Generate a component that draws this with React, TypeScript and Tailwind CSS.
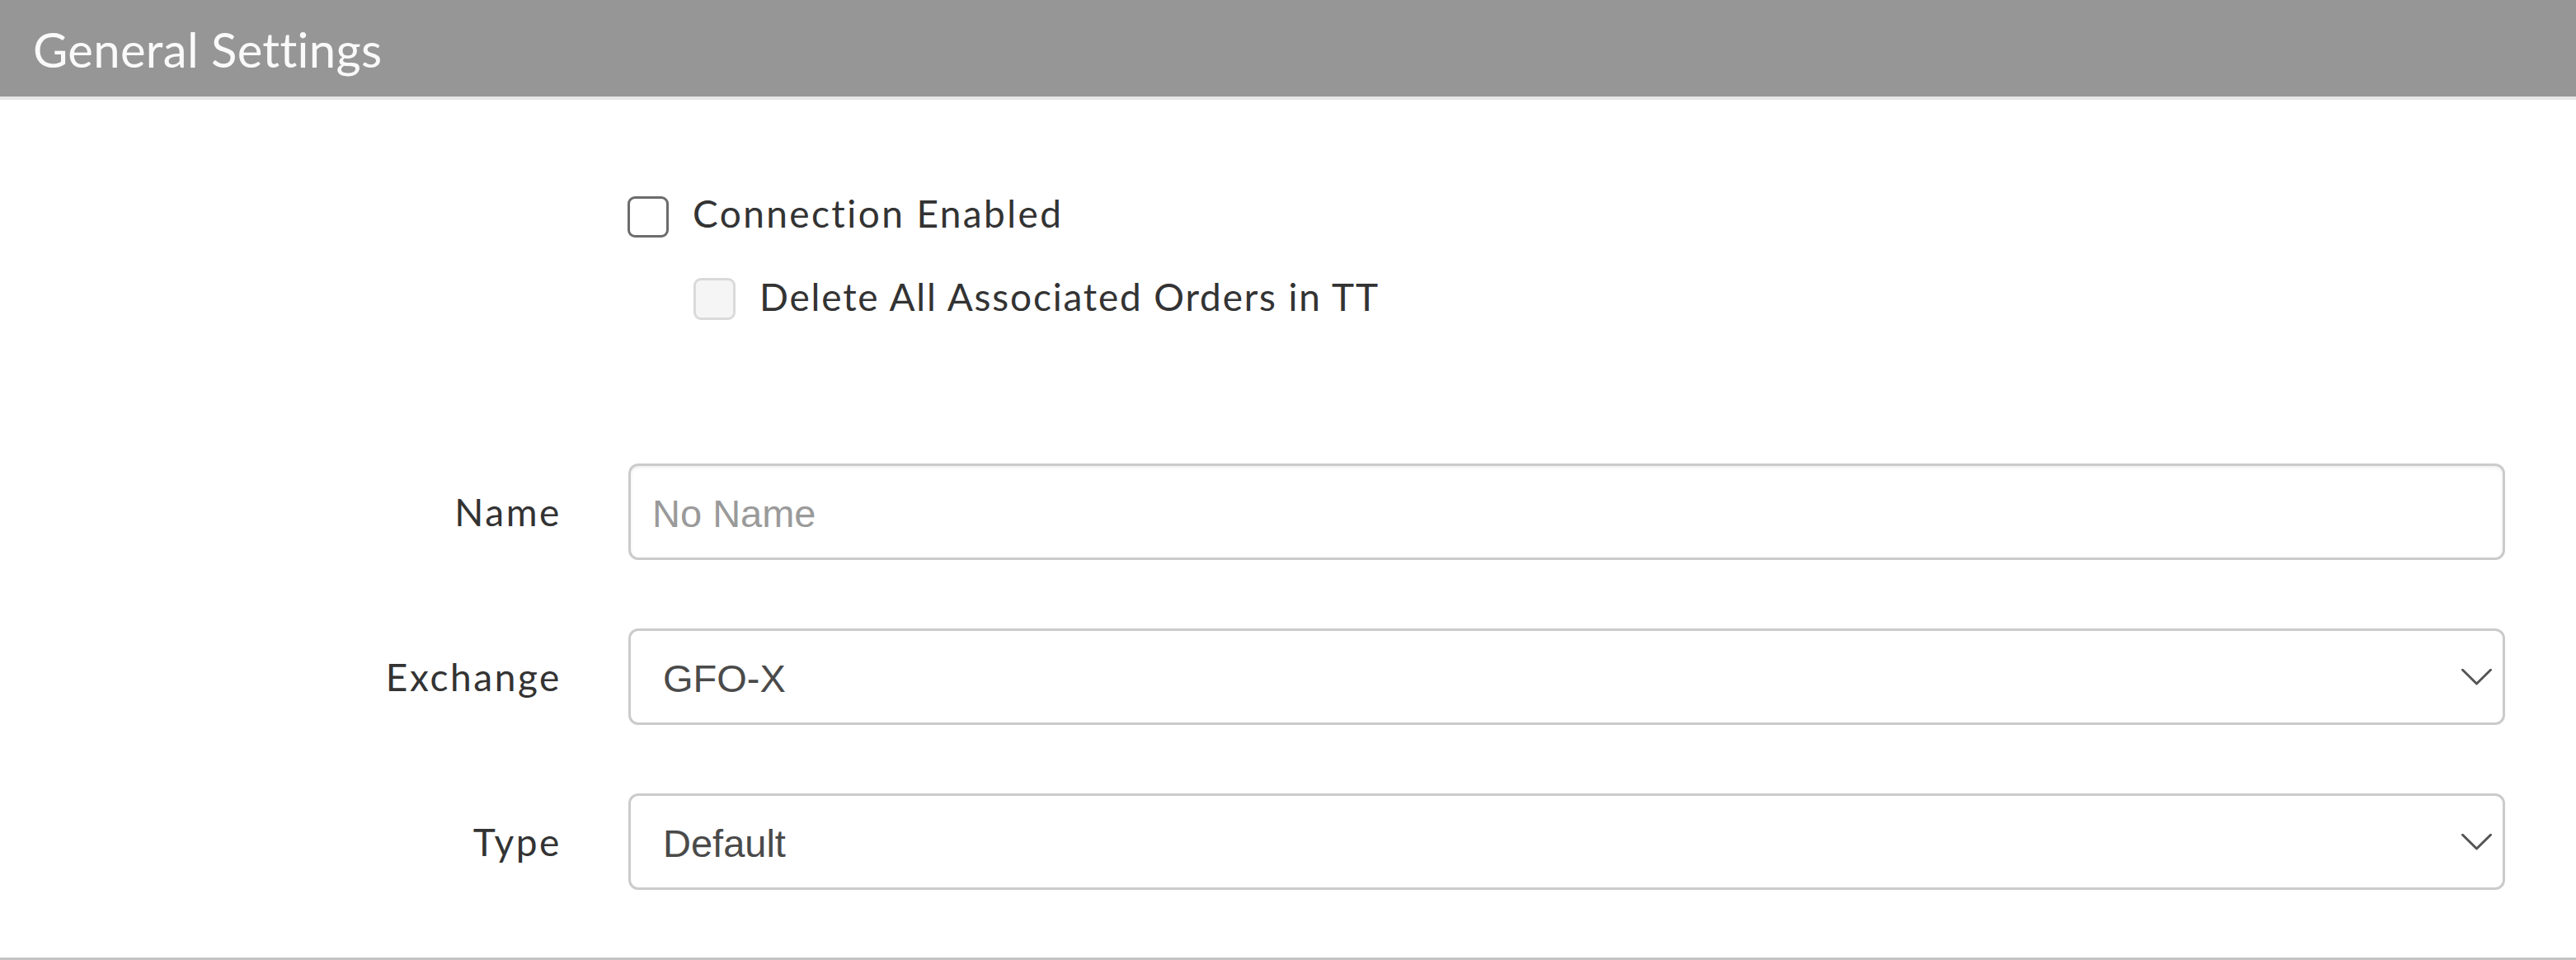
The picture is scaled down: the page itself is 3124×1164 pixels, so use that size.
import React from "react";

const avenir = { fontFamily: "Lato, 'Noto Sans', sans-serif" };
const helv = { fontFamily: "'Liberation Sans', Arial, sans-serif" };

function Chevron() {
  return (
    <svg width="37" height="21" viewBox="0 0 37 21" className="absolute right-[13px] top-1/2 -translate-y-1/2" fill="none">
      <path d="M1.5 1.8 L18.5 18.5 L35.5 1.8" stroke="#555555" strokeWidth="3" strokeLinecap="round" strokeLinejoin="round" />
    </svg>
  );
}

function Row({ label, children }: { label: string; children: React.ReactNode }) {
  return (
    <div className="flex items-center h-[117px]">
      <div className="w-[681px] text-right text-[46px] text-[#333333] tracking-[2.6px]" style={avenir}>
        {label}
      </div>
      <div className="ml-[81px] flex-1 mr-[86px] h-full">{children}</div>
    </div>
  );
}

export default function App() {
  return (
    <div className="w-[3124px] h-[1164px] bg-white flex flex-col overflow-hidden">
      <div className="h-[121px] shrink-0 bg-[#969696] border-b-4 border-[#e6e6e6] flex items-center pl-[40px]">
        <span className="text-[58px] text-[#fafafa] leading-none pt-[2px] tracking-[0.3px]" style={avenir}>
          General Settings
        </span>
      </div>
      <div className="flex-1 flex flex-col border-b-[3px] border-[#c4c4c4]">
        <div className="pl-[761px] mt-[117px] flex flex-col gap-[49px]">
          <label className="flex items-center h-[50px] gap-[29px]">
            <span className="w-[50px] h-[50px] rounded-[9px] border-[3px] border-[#6c6c6c] bg-white shrink-0" />
            <span className="text-[46px] text-[#333333] leading-none pb-[8px] tracking-[2.4px]" style={avenir}>
              Connection Enabled
            </span>
          </label>
          <label className="flex items-center h-[51px] gap-[29px] pl-[80px]">
            <span className="w-[51px] h-[51px] rounded-[9px] border-[3px] border-[#dadada] bg-[#f5f5f5] shrink-0" />
            <span className="text-[46px] text-[#333333] leading-none pb-[6px] tracking-[1.8px]" style={avenir}>
              Delete All Associated Orders in TT
            </span>
          </label>
        </div>
        <div className="mt-[174px] flex flex-col gap-[83px]">
          <Row label="Name">
            <div className="h-full rounded-[12px] border-[3px] border-[#cbcbcb] shadow-[inset_0_2px_4px_rgba(0,0,0,0.07)] flex items-center pl-[26px] pt-[6px]">
              <span className="text-[47px] text-[#9a9a9a]" style={helv}>
                No Name
              </span>
            </div>
          </Row>
          <Row label="Exchange">
            <div className="relative h-full rounded-[12px] border-[3px] border-[#cbcbcb] flex items-center pl-[39px] pt-[6px]">
              <span className="text-[47px] text-[#4a4a4a]" style={helv}>
                GFO-X
              </span>
              <Chevron />
            </div>
          </Row>
          <Row label="Type">
            <div className="relative h-full rounded-[12px] border-[3px] border-[#cbcbcb] flex items-center pl-[39px] pt-[6px]">
              <span className="text-[47px] text-[#4a4a4a]" style={helv}>
                Default
              </span>
              <Chevron />
            </div>
          </Row>
        </div>
      </div>
    </div>
  );
}
